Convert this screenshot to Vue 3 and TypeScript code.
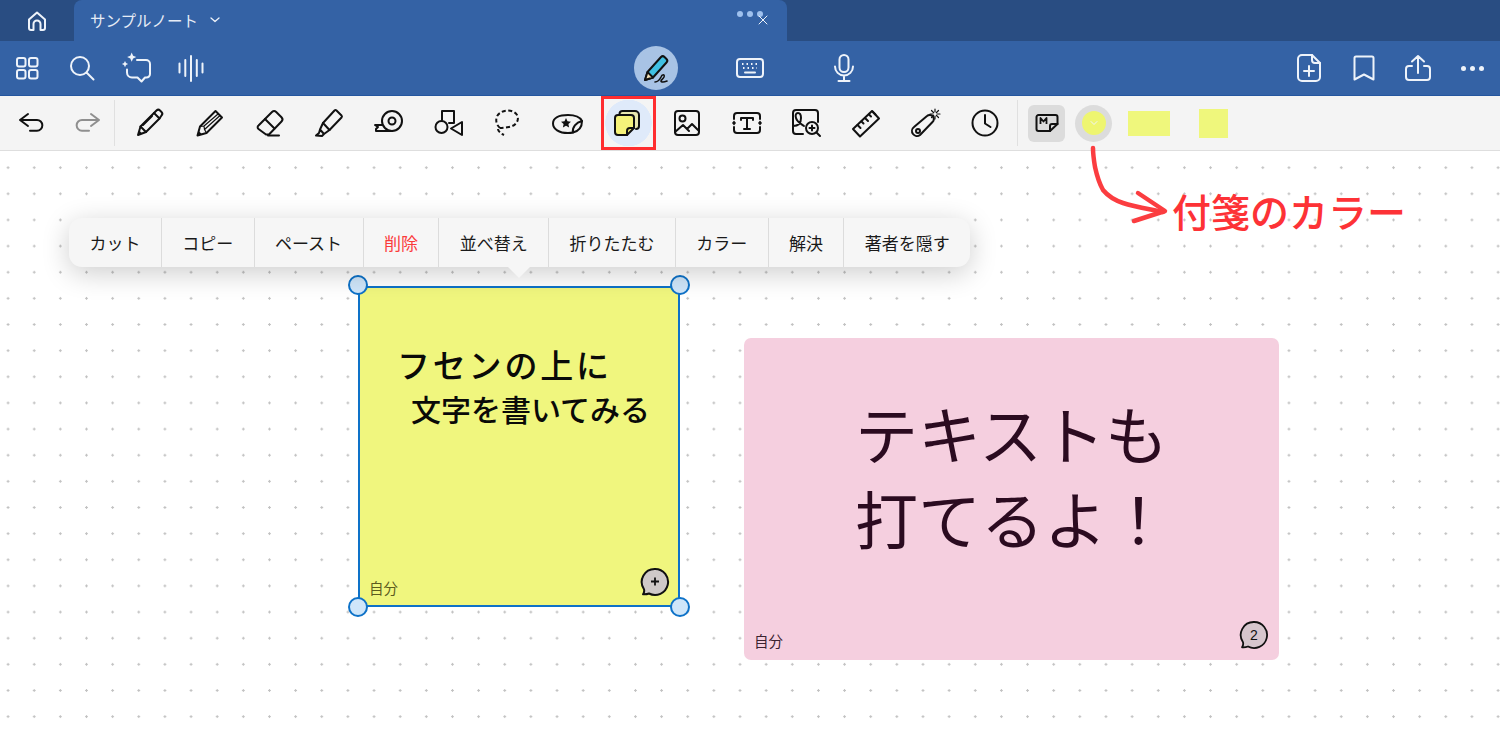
<script setup lang="ts">
const menuItems: { label: string; danger?: boolean }[] = [
  { label: 'カット' },
  { label: 'コピー' },
  { label: 'ペースト' },
  { label: '削除', danger: true },
  { label: '並べ替え' },
  { label: '折りたたむ' },
  { label: 'カラー' },
  { label: '解決' },
  { label: '著者を隠す' },
]
const handles = ['tl', 'tr', 'bl', 'br']
</script>

<template>
  <div class="page">
    <header class="tabbar">
      <div class="home">
        <svg class="ico" width="24" height="24" viewBox="0 0 24 24"><path d="M4 10.500 12 3.500l8 7V19a2 2 0 0 1-2 2h-2.500v-6a3.500 3.500 0 0 0-7 0v6H6a2 2 0 0 1-2-2z" /></svg>
      </div>
      <div class="tab">
        <span class="tab-title">サンプルノート</span>
        <svg class="ico chev" width="12" height="12" viewBox="0 0 12 12"><path d="M2 4l4 3.500L10 4" /></svg>
        <div class="tab-end">
          <span class="dots"><i></i><i></i><i></i></span>
          <svg class="ico close" width="12" height="12" viewBox="0 0 12 12"><path d="M2 2l8 8M10 2l-8 8" /></svg>
        </div>
      </div>
      <div class="tab-rest"></div>
    </header>

    <nav class="mainbar">
      <div class="group left">
        <button class="mbtn"><svg class="ico" width="28" height="28" viewBox="0 0 28 28"><rect x="4" y="4" width="8.500" height="8.500" rx="2" /><rect x="16" y="4" width="8.500" height="8.500" rx="2" /><rect x="4" y="16" width="8.500" height="8.500" rx="2" /><rect x="16" y="16" width="8.500" height="8.500" rx="2" /></svg></button>
        <button class="mbtn"><svg class="ico" width="28" height="28" viewBox="0 0 28 28"><circle cx="12" cy="12" r="9" /><path d="M18.500 18.500l7 7" /></svg></button>
        <button class="mbtn"><svg class="ico" width="32" height="32" viewBox="0 0 32 32"><path d="M17 8h9a4 4 0 0 1 4 4v10a3.500 3.500 0 0 1-3.500 3.500H25l-3.500 4-4-4H12a5 5 0 0 1-5-5v-3" /><path class="fill" d="M11.700 0.500l1.400 3.200 3.200 1.400-3.200 1.400-1.400 3.200-1.400-3.200-3.200-1.400 3.200-1.400zM5 9l1 2.100 2.100 1-2.100 1L5 15.200l-1-2.100-2.100-1 2.100-1z" /></svg></button>
        <button class="mbtn"><svg class="ico" width="28" height="28" viewBox="0 0 28 28"><path d="M2.500 9.500v9M8.300 6v16M14 2v25M19.800 6v16M25.500 9.500v9" /></svg></button>
      </div>
      <div class="group center">
        <button class="pen-mode">
          <svg width="32" height="32" viewBox="0 0 32 32"><path d="M5 28l2.500-8L21 5a2.500 2.500 0 0 1 3.500 0l2 2a2.500 2.500 0 0 1 0 3.500L13 25.500z" fill="#3fc0e3" stroke="#111" stroke-width="2" stroke-linejoin="round" /><path d="M7.500 20l5.500 5.500L5 28z" fill="#f6e3b8" stroke="#111" stroke-width="2" stroke-linejoin="round" /><path d="M15 30c3 0 5-3 6-5 1-3 4-3 3 0-1 2-3 3-3 4 0 1.500 3 1 6 0" fill="none" stroke="#111" stroke-width="1.600" stroke-linecap="round" /></svg>
        </button>
        <button class="cbtn"><svg class="ico" width="30" height="24" viewBox="0 0 30 24"><rect x="2" y="3" width="26" height="18" rx="3" /><path d="M10 16.500h10" /><path class="dotline" d="M7 8h16M8 12h14" /></svg></button>
        <button class="cbtn"><svg class="ico" width="24" height="30" viewBox="0 0 24 30"><rect x="7.500" y="2" width="9" height="17" rx="4.500" /><path d="M3 13.500a9 9 0 0 0 18 0M12 22.500V28M6.500 28h11" /></svg></button>
      </div>
      <div class="group right">
        <button class="mbtn"><svg class="ico" width="26" height="30" viewBox="0 0 26 30"><path d="M6 2h10l8 8v14a4 4 0 0 1-4 4H6a4 4 0 0 1-4-4V6a4 4 0 0 1 4-4z" /><path d="M16 2v5a3 3 0 0 0 3 3h5M13 13v10M8 18h10" /></svg></button>
        <button class="mbtn"><svg class="ico" width="24" height="28" viewBox="0 0 24 28"><path d="M4 2.500h16a1.500 1.500 0 0 1 1.500 1.500v21.500L12 20.500l-9.500 5V4A1.500 1.500 0 0 1 4 2.500z" /></svg></button>
        <button class="mbtn"><svg class="ico" width="28" height="28" viewBox="0 0 28 28"><path d="M14 19V2M8 7.500 14 2l6 5.500M8 12H5a3 3 0 0 0-3 3v8a3 3 0 0 0 3 3h18a3 3 0 0 0 3-3v-8a3 3 0 0 0-3-3h-3" /></svg></button>
        <button class="mbtn"><span class="more"><i></i><i></i><i></i></span></button>
      </div>
    </nav>

    <div class="toolbar">
      <div class="history">
        <button class="hbtn"><svg class="tool" width="32" height="32" viewBox="0 0 32 32"><path d="M4 13h17a5.300 5.300 0 0 1 0 10.700h-7M12 7l-8 6 8 6" /></svg></button>
        <button class="hbtn"><svg class="tool off" width="32" height="32" viewBox="0 0 32 32"><path d="M28 13H11a5.300 5.300 0 0 0 0 10.700h7M20 7l8 6-8 6" /></svg></button>
      </div>
      <div class="tools">
        <button class="tbtn"><svg class="tool" width="32" height="32" viewBox="0 0 32 32"><path d="M4 28l2.500-8.500L20 6l5.500 5.500L12 25z" /><path d="M20 6l2.500-2.500a2.500 2.500 0 0 1 3.500 0l1.500 1.500a2.500 2.500 0 0 1 0 3.500L25.500 11.500M6.500 19.500 12 25M9 18l9-9" /><path class="solid" d="M4 28l1.200-4.500 3.300 3.300z" /></svg></button>
        <button class="tbtn"><svg class="tool" width="32" height="32" viewBox="0 0 32 32"><path d="M3.500 28.500l2.500-9L21.500 4l6.500 6.500L12.500 26z" /><path class="thin2" d="M6 19.500l4-.5.500 3.500 2 3.500M10 19 24 7M10.500 22.500 26 8.500" /><path class="solid" d="M3.500 28.500l1.200-4.500 3.300 3.300z" /></svg></button>
        <button class="tbtn"><svg class="tool" width="32" height="32" viewBox="0 0 32 32"><path d="M4.500 18.500 18 5a3 3 0 0 1 4.200 0l5.300 5.300a3 3 0 0 1 0 4.200L15 27.500h-3l-7.500-5.500a2.200 2.200 0 0 1 0-3.500z" /><path d="M11 12l9.500 9.500M14 28.500h11" /></svg></button>
        <button class="tbtn"><svg class="tool" width="32" height="32" viewBox="0 0 32 32"><path d="M10 16 21.500 3.500a1.500 1.500 0 0 1 2 0l5 5a1.500 1.500 0 0 1 0 2L16.500 23z" /><path d="M10 16l-3 6.500 4 4.500 5.500-4M7 22.500 6 26l-3 2.500 6 .5 2-2" /></svg></button>
        <button class="tbtn"><svg class="tool" width="32" height="32" viewBox="0 0 32 32"><circle cx="19" cy="14" r="10" /><circle cx="19" cy="14" r="3.500" /><path d="M19 24H3v-2l2-2-3-2h7" /></svg></button>
        <button class="tbtn"><svg class="tool" width="32" height="32" viewBox="0 0 32 32"><path d="M9 13V4h12v12h-5" /><circle cx="8.500" cy="20" r="6" /><path d="M29 15v13l-11-6.500z" /></svg></button>
        <button class="tbtn"><svg class="tool" width="32" height="32" viewBox="0 0 32 32"><path class="dash" d="M8 21C3 17 3 9 8 6c5-4 14-3 17 2 3 6-2 11-8 12-3 .5-6 1-9 1" /><path class="dash" d="M6 22c0 2 2 4 6 6" /></svg></button>
        <button class="tbtn"><svg class="tool" width="32" height="32" viewBox="0 0 32 32"><path d="M30 14c-2-4-7-6-14-6C7 8 1 11 1 16.500S7 26 16 26c2 0 3 0 5-.5" /><path d="M30 14c0 6-3 10-9 11.500-1-5 3-10 9-11.500z" /><path class="solid" d="M14 11l1.500 3.300 3.500.4-2.600 2.400.7 3.500-3.100-1.800-3.100 1.800.7-3.500L9 14.700l3.500-.4z" /></svg></button>
        <button class="tbtn active">
          <span class="active-dot"></span>
          <svg class="tool over" width="32" height="32" viewBox="0 0 32 32"><path d="M8.500 7A3 3 0 0 1 11.500 4H24a4 4 0 0 1 4 4v11a3 3 0 0 1-3 3" fill="#e9e8b0" /><path d="M7 8h13a3 3 0 0 1 3 3v10l-7 7H7a3 3 0 0 1-3-3V11a3 3 0 0 1 3-3z" fill="#f5f27a" /><path d="M23 21h-4a3 3 0 0 0-3 3v4" /></svg>
        </button>
        <button class="tbtn"><svg class="tool" width="32" height="32" viewBox="0 0 32 32"><rect x="4" y="4" width="24" height="24" rx="3" /><circle cx="11.500" cy="11.500" r="3" /><path d="M4 25l8-7 6 6M16 22l5-5 7 7" /></svg></button>
        <button class="tbtn"><svg class="tool" width="32" height="32" viewBox="0 0 32 32"><path d="M3 12V9a3 3 0 0 1 3-3h20a3 3 0 0 1 3 3v3M3 20v3a3 3 0 0 0 3 3h20a3 3 0 0 0 3-3v-3" /><path d="M10 13v-2h12v2M16 11v11M13 22h6" /><path class="solid" d="M3 13.500l2 2.500-2 2.500-2-2.500zM29 13.500l2 2.500-2 2.500-2-2.500z" /></svg></button>
        <button class="tbtn"><svg class="tool" width="32" height="32" viewBox="0 0 32 32"><path d="M13 27H6a3 3 0 0 1-3-3V6a3 3 0 0 1 3-3h19a3 3 0 0 1 3 3v9" /><circle cx="22" cy="21" r="6" /><path d="M26.500 25.500 30 29M22 18.500v5M19.500 21h5M3 19c4 0 8-1 8-8 0-3-1-5-3-5s-3 2-2 5c1 4 5 6 8 8" /></svg></button>
        <button class="tbtn"><svg class="tool" width="32" height="32" viewBox="0 0 32 32"><path d="M3 22 22 4l7 7.500L10 29.500z" /><path d="M7.500 18l3 3M11.500 14.500l2 2M15 11l3 3M19 7.500l2 2M22.500 4.500l3 3" /></svg></button>
        <button class="tbtn"><svg class="tool" width="32" height="32" viewBox="0 0 32 32"><path d="M4 20 17 9a4 4 0 0 1 5.500 6L10 28a4 4 0 0 1-6-8z" /><circle cx="8" cy="24" r="2" /><path class="thin" d="M25 2v3M25 9v3M20 7h3M27 7h3M21.500 3.500l2 2M26.500 8.500l2 2M28.500 3.500l-2 2M23.500 8.500l-2 2" /></svg></button>
        <button class="tbtn"><svg class="tool" width="32" height="32" viewBox="0 0 32 32"><circle cx="16" cy="16" r="12.500" /><path d="M16 8v8.500l5.500 3.500" /></svg></button>
      </div>
      <div class="swatches">
        <button class="note-type"><svg class="tool" width="24" height="20" viewBox="0 0 24 20"><path d="M3.500 2h17A2 2 0 0 1 22.500 4v7L15 18H3.500a2 2 0 0 1-2-2V4a2 2 0 0 1 2-2z" /><path d="M22.500 11H17a2 2 0 0 0-2 2v5" /><path class="mono" d="M5.500 11V5l3 3.500 3-3.500v6" /></svg></button>
        <button class="color-ring"><span class="color-fill"><svg class="ico thin-chev" width="8" height="6" viewBox="0 0 8 6"><path d="M1 1.500l3 3 3-3" /></svg></span></button>
        <span class="swatch wide"></span>
        <span class="swatch square"></span>
      </div>
    </div>

    <main class="canvas">
      <div class="note yellow">
        <div class="ink"><span class="ink-1">フセンの上に</span><span class="ink-2">文字を書いてみる</span></div>
        <span class="author">自分</span>
        <svg class="bubble" width="30" height="30" viewBox="0 0 30 30"><path d="M15 2a13 13 0 1 1-6 24.500c-2 .8-4 1-6 .8 1-1.300 1.500-3 1-5A13 13 0 0 1 15 2z" fill="#cfc9c8" stroke="#111" stroke-width="2" stroke-linejoin="round" /><path d="M15 10.500v8M11 14.500h8" stroke="#111" stroke-width="1.800" /></svg>
        <span v-for="h in handles" :key="h" class="handle" :class="h"></span>
      </div>

      <div class="note pink">
        <div class="typed">テキストも<br />打てるよ！</div>
        <span class="author">自分</span>
        <span class="bubble-wrap">
          <svg width="30" height="30" viewBox="0 0 30 30"><path d="M15 2a13 13 0 1 1-6 24.500c-2 .8-4 1-6 .8 1-1.300 1.500-3 1-5A13 13 0 0 1 15 2z" fill="#d6c6cd" stroke="#111" stroke-width="1.800" stroke-linejoin="round" /></svg>
          <span class="count">2</span>
        </span>
      </div>

      <div class="menu">
        <button v-for="item in menuItems" :key="item.label" class="menu-item" :class="{ danger: item.danger }">{{ item.label }}</button>
        <span class="menu-tail"></span>
      </div>

      <svg class="arrow" width="100" height="90" viewBox="0 0 100 90"><path d="M5 0c0 7 1 13 2 19 2 9 4 16 8 23 5 6 11 10 20 13 12 4 26 6 40 9" /><path d="M50 45l27 18-31 10" /></svg>
      <div class="callout">付箋のカラー</div>
    </main>
  </div>
</template>

<style>
html, body { margin: 0; padding: 0; background: #fff; }
</style>

<style scoped>
.page {
  width: 1500px;
  height: 730px;
  display: flex;
  flex-direction: column;
  overflow: hidden;
  font-family: "Noto Sans CJK JP", "Noto Sans", sans-serif;
  background: #fff;
}
button { border: 0; background: none; padding: 0; margin: 0; font: inherit; cursor: pointer; display: flex; align-items: center; justify-content: center; }
.ico { fill: none; stroke: #eef3fa; stroke-width: 2; stroke-linecap: round; stroke-linejoin: round; display: block; }
.ico .fill { fill: #eef3fa; stroke: none; }
.ico .dotline { stroke-width: 2; stroke-dasharray: 1.500 3; stroke-linecap: butt; }

.tabbar { height: 41px; display: flex; background: #294d82; flex: none; }
.home { width: 74px; display: flex; align-items: center; justify-content: center; }
.tab {
  width: 713px;
  background: #3462a5;
  border-radius: 8px 8px 0 0;
  display: flex;
  align-items: center;
  padding-left: 16px;
  padding-bottom: 2px;
  box-sizing: border-box;
  gap: 11px;
}
.tab-title { color: #e6ecf6; font-size: 15.500px; }
.chev { stroke-width: 1.300; margin-top: 1px; }
.tab-end { margin-left: auto; width: 60px; height: 41px; display: flex; position: relative; }
.dots { display: flex; gap: 4px; position: absolute; left: 10px; top: 12px; }
.dots i { width: 6px; height: 6px; border-radius: 50%; background: #9fc1ee; }
.close { position: absolute; left: 30px; top: 15px; stroke-width: 1; }
.tab-rest { flex: 1; border-radius: 0 0 0 6px; }

.mainbar {
  height: 55px;
  flex: none;
  background: #3462a5;
  border-bottom: 1px solid #24569f;
  box-sizing: border-box;
  display: grid;
  grid-template-columns: 1fr auto 1fr;
  align-items: center;
}
.group { display: flex; align-items: center; }
.left .mbtn { width: 54.500px; }
.right { justify-content: flex-end; }
.right .mbtn { width: 54.500px; }
.mbtn { height: 54px; }
.center { gap: 50px; }
.cbtn { width: 44px; height: 44px; }
.pen-mode { width: 44px; height: 44px; border-radius: 50%; background: #a8c3e5; }
.more { display: flex; gap: 4px; }
.more i { width: 5px; height: 5px; border-radius: 50%; background: #eef3fa; }

.toolbar {
  height: 55px;
  flex: none;
  box-sizing: border-box;
  background: #f4f4f4;
  border-bottom: 1px solid #dedede;
  display: flex;
  align-items: center;
}
.tool { fill: none; stroke: #111; stroke-width: 2; stroke-linecap: round; stroke-linejoin: round; display: block; }
.tool.off { stroke: #8f8f8f; }
.tool .solid { fill: #111; stroke: none; }
.tool .dash { stroke-dasharray: 4 2.500; stroke-linecap: butt; }
.tool .thin { stroke-width: 1.200; }
.tool .thin2 { stroke-width: 1.200; }
.tool .mono { stroke-width: 1.800; stroke-linecap: butt; }
.history { display: flex; width: 115px; height: 46px; padding-left: 5px; box-sizing: border-box; border-right: 1px solid #e0e0e0; align-items: center; }
.hbtn { width: 54.500px; height: 46px; }
.tools { display: flex; width: 903px; height: 46px; padding-left: 5.500px; box-sizing: border-box; border-right: 1px solid #e0e0e0; align-items: center; }
.tbtn { width: 59.650px; height: 46px; position: relative; flex: none; }
.active-dot {
  position: absolute;
  left: 3.300px;
  top: -4px;
  width: 55px;
  height: 54px;
  box-sizing: border-box;
  background: radial-gradient(circle, #dfeafa 23px, transparent 23.500px);
  border: 3.500px solid #ff2d2f;
}
.over { position: relative; }
.swatches { display: flex; align-items: center; padding-left: 10px; }
.note-type { width: 37px; height: 37px; border-radius: 6px; background: #dcdcdc; }
.color-ring { width: 37px; height: 37px; border-radius: 50%; background: #dcdcdc; margin-left: 10px; }
.color-fill { width: 24px; height: 24px; border-radius: 50%; background: #eef570; display: flex; align-items: center; justify-content: center; }
.thin-chev { stroke-width: 1; }
.swatch { background: #eff77c; display: block; }
.swatch.wide { width: 42px; height: 25px; margin-left: 16px; }
.swatch.square { width: 29px; height: 29px; margin-left: 29px; }

.canvas {
  flex: 1;
  position: relative;
  background-color: #fff;
  background-image: radial-gradient(circle, #c2c2c2 1px, transparent 1.400px);
  background-size: 26.150px 26.150px;
  background-position: -5px 3.600px;
}
.note { position: absolute; box-sizing: border-box; }
.yellow { left: 358px; top: 135px; width: 322px; height: 321px; background: #f0f67e; border: 2px solid #0e72c8; }
.pink { left: 744px; top: 187px; width: 535px; height: 322px; background: #f5cfdf; border-radius: 7px; }
.ink { position: absolute; left: 37px; top: 53px; display: flex; flex-direction: column; color: #0a0a08; font-weight: 500; white-space: nowrap; }
.ink-1 { font-size: 33px; line-height: 46px; letter-spacing: 2.800px; }
.ink-2 { font-size: 30px; line-height: 42px; margin-left: 14px; }
.author { position: absolute; font-size: 14.500px; line-height: 18px; }
.yellow .author { left: 9px; bottom: 8px; color: #5d5c1e; }
.pink .author { left: 10px; bottom: 10px; color: #3b2230; }
.bubble { position: absolute; right: 8px; bottom: 8px; }
.bubble-wrap { position: absolute; right: 10px; bottom: 10px; width: 30px; height: 30px; display: flex; align-items: center; justify-content: center; }
.bubble-wrap svg { position: absolute; inset: 0; }
.count { position: relative; font-size: 14px; color: #111; font-family: "Liberation Sans", sans-serif; }
.typed { position: absolute; left: 111px; top: 51px; font-size: 63px; line-height: 85px; color: #2b0b20; white-space: nowrap; }
.handle { position: absolute; width: 20px; height: 20px; box-sizing: border-box; border-radius: 50%; background: #cfe6fa; border: 2px solid #0e72c8; }
.handle.tl { left: -12px; top: -13px; }
.handle.tr { right: -12px; top: -13px; }
.handle.bl { left: -12px; bottom: -12px; }
.handle.br { right: -12px; bottom: -12px; }

.menu {
  position: absolute;
  left: 69px;
  top: 67px;
  height: 49px;
  display: flex;
  background: #f6f6f6;
  border-radius: 13px;
  box-shadow: 0 6px 28px rgba(0, 0, 0, .2);
}
.menu-item { font-size: 17px; line-height: 46px; height: 49px; color: #1a1a1a; padding: 0 20.400px; border-left: 1.500px solid #dcdcdc; white-space: nowrap; box-sizing: content-box; }
.menu-item:first-of-type { border-left: 0; }
.menu-item.danger { color: #fb3b3b; }
.menu-tail { position: absolute; left: 439px; top: 49px; width: 0; height: 0; border-left: 11px solid transparent; border-right: 11px solid transparent; border-top: 11px solid #f6f6f6; }

.arrow { position: absolute; left: 1088px; top: -3px; fill: none; stroke: #fb3d40; stroke-width: 4.500; stroke-linecap: round; stroke-linejoin: round; overflow: visible; }
.callout { position: absolute; left: 1172px; top: 31px; font-size: 39px; line-height: 56px; font-weight: 500; color: #fd3236; white-space: nowrap; }
</style>
